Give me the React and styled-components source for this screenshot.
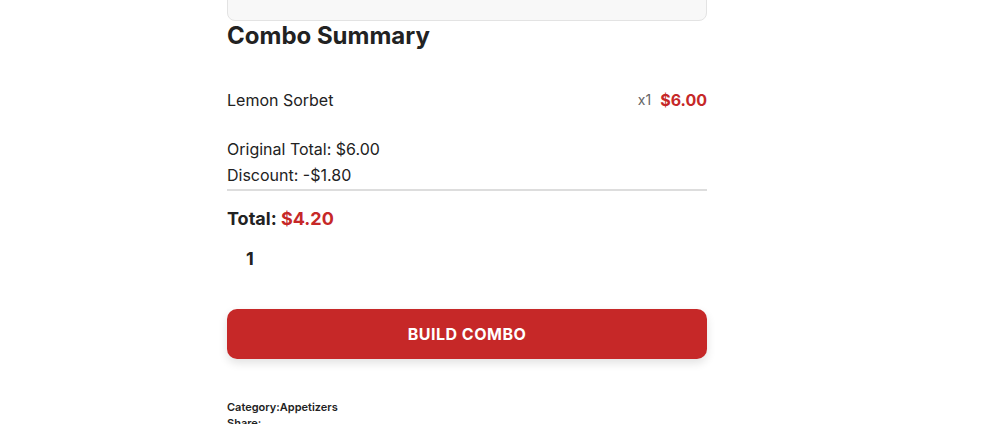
import React from 'react'
import styled, { createGlobalStyle } from 'styled-components'

const GlobalStyle = createGlobalStyle`
  body {
    margin: 0;
    background: #fff;
    font-family: Inter, "Noto Sans", sans-serif;
    color: #222;
  }
`

const Page = styled.div`
  padding-left: 227px;
  height: 424px;
  overflow: hidden;
`

const Column = styled.div`
  width: 480px;
  display: flex;
  flex-direction: column;
`

const TopPanel = styled.div`
  height: 60px;
  margin-top: -39px;
  box-sizing: border-box;
  background: #f8f8f8;
  border: 1px solid #e3e3e3;
  border-radius: 8px;
`

const Heading = styled.h2`
  margin: 1px 0 0;
  font-size: 24px;
  line-height: 28px;
  font-weight: 700;
  color: #222;
`

const ItemRow = styled.div`
  margin-top: 38px;
  display: flex;
  align-items: center;
  justify-content: space-between;
  font-size: 16px;
  line-height: 24px;
`

const ItemPrice = styled.div`
  display: flex;
  align-items: center;
  gap: 9px;
`

const Qty = styled.span`
  font-size: 14px;
  color: #666;
`

const Red = styled.span`
  color: #c62828;
  font-weight: 700;
`

const Totals = styled.div`
  margin-top: 24px;
  font-size: 16px;
  line-height: 26px;
  padding-bottom: 1px;
  border-bottom: 2px solid #ddd;
`

const GrandTotal = styled.div`
  margin-top: 14px;
  font-size: 18px;
  line-height: 27px;
  font-weight: 700;
`

const Quantity = styled.div`
  margin-top: 13px;
  padding-left: 19px;
  font-size: 18px;
  line-height: 27px;
  font-weight: 700;
`

const BuildButton = styled.button`
  margin-top: 37px;
  height: 50px;
  border: none;
  border-radius: 10px;
  background: #c62828;
  color: #fff;
  font-family: Inter, "Noto Sans", sans-serif;
  font-size: 16px;
  font-weight: 700;
  letter-spacing: 0.5px;
  box-shadow: 0 4px 10px rgba(0, 0, 0, 0.12);
  cursor: pointer;
`

const MetaList = styled.div`
  margin-top: 40px;
  font-size: 11px;
  line-height: 16px;
  font-weight: 600;
  color: #222;
`

export default function App() {
  return (
    <>
      <GlobalStyle />
      <Page>
        <Column>
          <TopPanel />
          <Heading>Combo Summary</Heading>
          <ItemRow>
            <span>Lemon Sorbet</span>
            <ItemPrice>
              <Qty>x1</Qty>
              <Red>$6.00</Red>
            </ItemPrice>
          </ItemRow>
          <Totals>
            <div>Original Total: $6.00</div>
            <div>Discount: -$1.80</div>
          </Totals>
          <GrandTotal>
            Total: <Red>$4.20</Red>
          </GrandTotal>
          <Quantity>1</Quantity>
          <BuildButton>BUILD COMBO</BuildButton>
          <MetaList>
            <div>Category:Appetizers</div>
            <div>Share:</div>
          </MetaList>
        </Column>
      </Page>
    </>
  )
}
